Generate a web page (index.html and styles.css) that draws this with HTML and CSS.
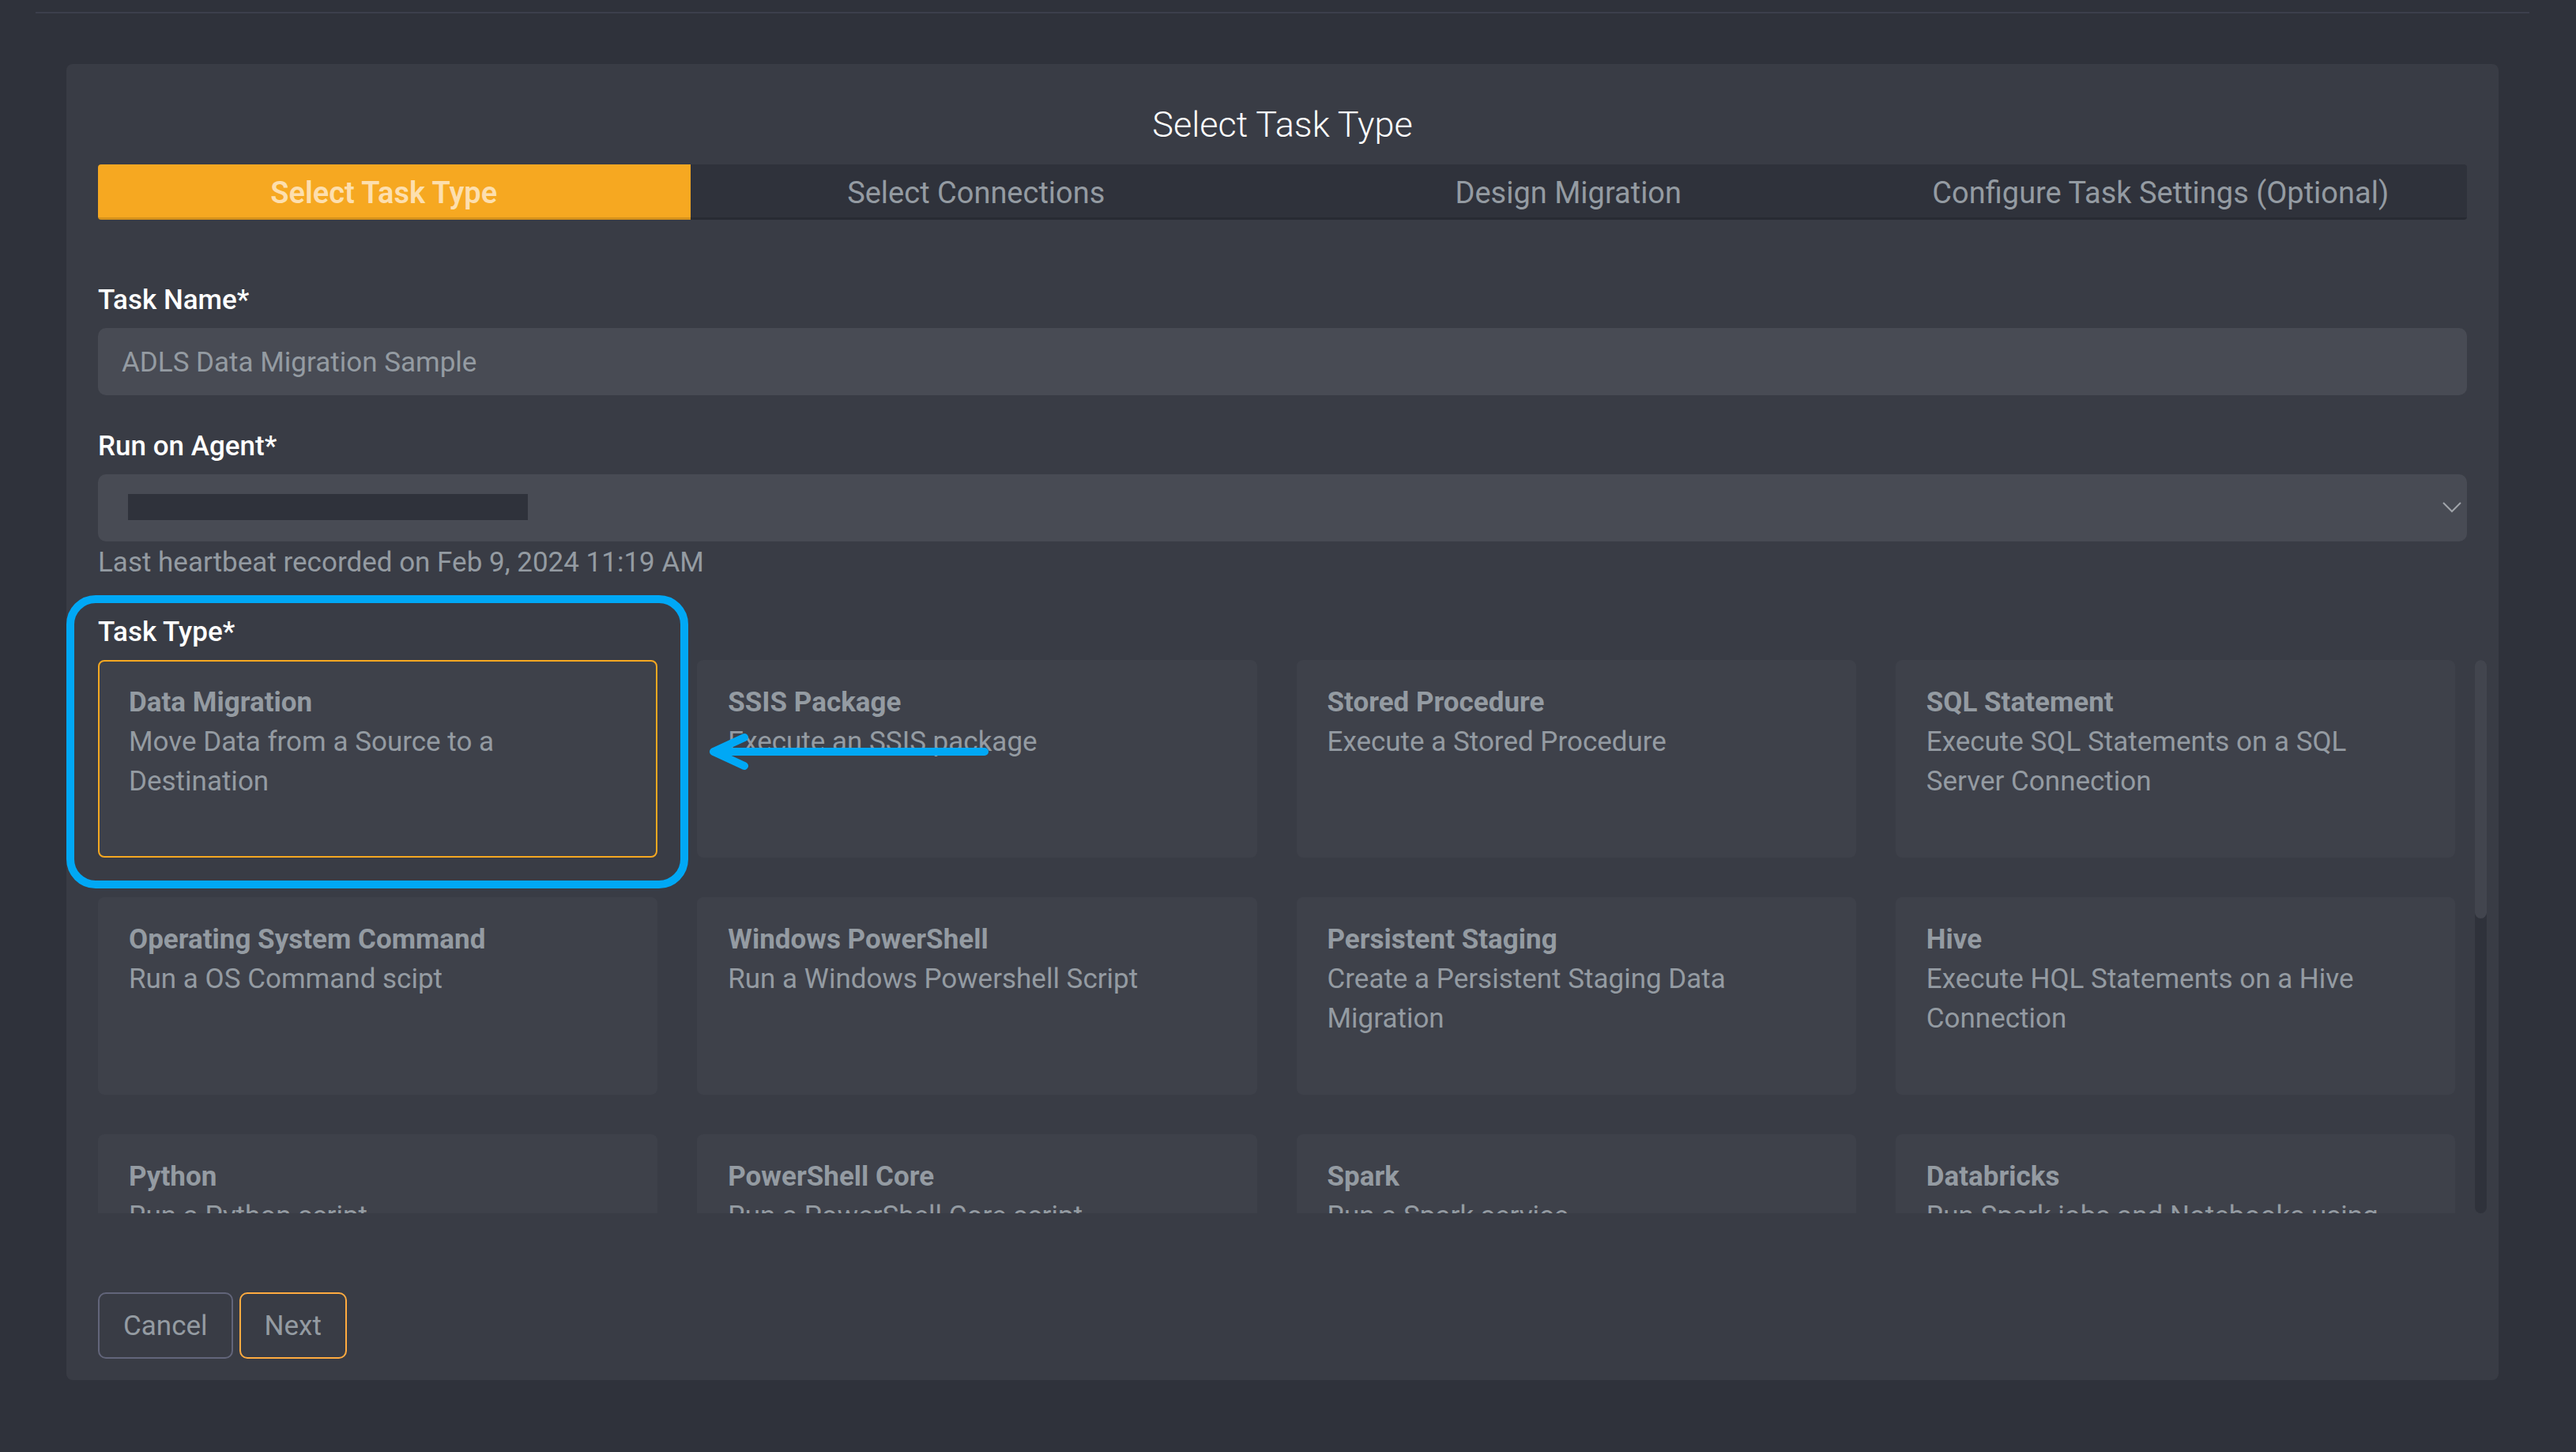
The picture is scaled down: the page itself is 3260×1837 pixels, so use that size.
FILE: index.html
```html
<!DOCTYPE html>
<html lang="en">
<head>
<meta charset="utf-8">
<title>Select Task Type</title>
<link rel="stylesheet" href="styles.css">
</head>
<body>
<hr class="divider">
<main class="panel">
  <h1 class="panel-title">Select Task Type</h1>
  <nav class="steps">
    <a class="step step-active" href="#type">Select Task Type</a>
    <a class="step" href="#connections">Select Connections</a>
    <a class="step" href="#design">Design Migration</a>
    <a class="step" href="#settings">Configure Task Settings (Optional)</a>
  </nav>
  <form class="form">
    <div class="field">
      <label class="label" for="task-name">Task Name*</label>
      <input class="control" id="task-name" type="text" value="ADLS Data Migration Sample">
    </div>
    <div class="field">
      <label class="label" for="agent">Run on Agent*</label>
      <div class="select-wrap">
        <select class="control" id="agent"><option></option></select>
        <span class="redacted"></span>
        <svg class="chevron" viewBox="0 0 24 16" aria-hidden="true"><path d="M1 2l11 11L23 2"/></svg>
      </div>
      <p class="hint">Last heartbeat recorded on Feb 9, 2024 11:19 AM</p>
    </div>
    <section class="types">
      <h2 class="label">Task Type*</h2>
      <div class="type-scroller">
        <div class="type-list">
          <button type="button" class="card card-selected"><strong>Data Migration</strong><span>Move Data from a Source to a Destination</span></button>
          <button type="button" class="card"><strong>SSIS Package</strong><span>Execute an SSIS package</span></button>
          <button type="button" class="card"><strong>Stored Procedure</strong><span>Execute a Stored Procedure</span></button>
          <button type="button" class="card"><strong>SQL Statement</strong><span>Execute SQL Statements on a SQL Server Connection</span></button>
          <button type="button" class="card"><strong>Operating System Command</strong><span>Run a OS Command scipt</span></button>
          <button type="button" class="card"><strong>Windows PowerShell</strong><span>Run a Windows Powershell Script</span></button>
          <button type="button" class="card"><strong>Persistent Staging</strong><span>Create a Persistent Staging Data Migration</span></button>
          <button type="button" class="card"><strong>Hive</strong><span>Execute HQL Statements on a Hive Connection</span></button>
          <button type="button" class="card"><strong>Python</strong><span>Run a Python script</span></button>
          <button type="button" class="card"><strong>PowerShell Core</strong><span>Run a PowerShell Core script</span></button>
          <button type="button" class="card"><strong>Spark</strong><span>Run a Spark service</span></button>
          <button type="button" class="card"><strong>Databricks</strong><span>Run Spark jobs and Notebooks using</span></button>
        </div>
        <div class="scroll-track"><div class="scroll-thumb"></div></div>
      </div>
      <div class="callout"></div>
      <svg class="arrow" viewBox="0 0 370 50" aria-hidden="true"><path d="M353 25H10M49 7L10 25l39 18"/></svg>
    </section>
    <div class="actions">
      <button type="button" class="btn">Cancel</button>
      <button type="button" class="btn btn-next">Next</button>
    </div>
  </form>
</main>
</body>
</html>
```
FILE: styles.css
```css
* {
  box-sizing: border-box;
}

body {
  margin: 0;
  padding: 15px 59px 90px 45px;
  background: #2f323b;
  color: #949ba2;
  font: 35px/50px Roboto, sans-serif;
}

.divider {
  height: 2px;
  margin: 0 0 64px;
  border: 0;
  background: #3c3f4c;
}

.panel {
  margin: 0 39px;
  padding: 52px 40px 27px;
  border-radius: 8px;
  background: #393c45;
}

.panel-title {
  margin: 0 0 25px;
  color: #fff;
  font-size: 45px;
  font-weight: 300;
  line-height: 50px;
  text-align: center;
}

.steps {
  display: grid;
  grid-template-columns: repeat(4, 1fr);
  margin-bottom: 77px;
  border-radius: 4px;
  background: #2f323b;
  overflow: hidden;
}

.step {
  padding: 2px 26px 0 0;
  color: inherit;
  font-size: 38px;
  line-height: 68px;
  text-align: center;
  text-decoration: none;
  box-shadow: inset 0 -3px 0 rgba(0, 0, 0, 0.13);
}

.step-active {
  background: #f6a821;
  color: #fddfae;
  font-weight: 600;
}

.field {
  margin-bottom: 40px;
}

.label {
  display: block;
  margin: 0 0 10px;
  color: #fff;
  font-size: 35px;
  font-weight: 500;
  line-height: 50px;
}

.control {
  display: block;
  width: 100%;
  height: 85px;
  padding: 2px 30px 0;
  border: 0;
  border-radius: 10px;
  background: #484b54;
  color: inherit;
  font: inherit;
  appearance: none;
}

.select-wrap {
  position: relative;
}

.redacted {
  position: absolute;
  top: 25px;
  left: 38px;
  width: 506px;
  height: 33px;
  background: #2f323b;
}

.chevron {
  position: absolute;
  top: 34px;
  right: 7px;
  width: 24px;
  height: 16px;
  fill: none;
  stroke: #a0a4aa;
  stroke-width: 2;
}

.hint {
  margin: 0;
  padding-top: 2px;
  margin-bottom: -2px;
}

.types {
  position: relative;
}

.type-scroller {
  display: flex;
  gap: 25px;
  height: 700px;
  margin-right: -25px;
}

.type-list {
  display: grid;
  flex: 1;
  grid-template-columns: repeat(4, 1fr);
  grid-auto-rows: 250px;
  gap: 50px;
  overflow-y: auto;
  scrollbar-width: none;
}

.scroll-track {
  width: 15px;
  border-radius: 8px;
  background: #2f323b;
}

.scroll-thumb {
  height: 327px;
  border-radius: 8px;
  background: #42454e;
}

.card {
  display: flex;
  flex-direction: column;
  justify-content: flex-start;
  padding: 27px 37px 0;
  border: 2px solid transparent;
  border-radius: 8px;
  background: #3e414a;
  color: inherit;
  font: inherit;
  text-align: left;
}

.card-selected {
  border-color: #f6a821;
}

.callout {
  position: absolute;
  top: -22px;
  left: -40px;
  width: 787px;
  height: 371px;
  border: 10px solid #00a8f5;
  border-radius: 37px;
}

.arrow {
  position: absolute;
  top: 151px;
  left: 769px;
  width: 370px;
  height: 50px;
  fill: none;
  stroke: #00a8f5;
  stroke-width: 10;
  stroke-linecap: round;
  stroke-linejoin: round;
}

.actions {
  display: flex;
  gap: 8px;
  margin-top: 100px;
}

.btn {
  height: 84px;
  padding: 2px 30px 0;
  border: 2px solid #62657a;
  border-radius: 10px;
  background: none;
  color: inherit;
  font: inherit;
}

.btn-next {
  border-color: #ffab40;
}
```
